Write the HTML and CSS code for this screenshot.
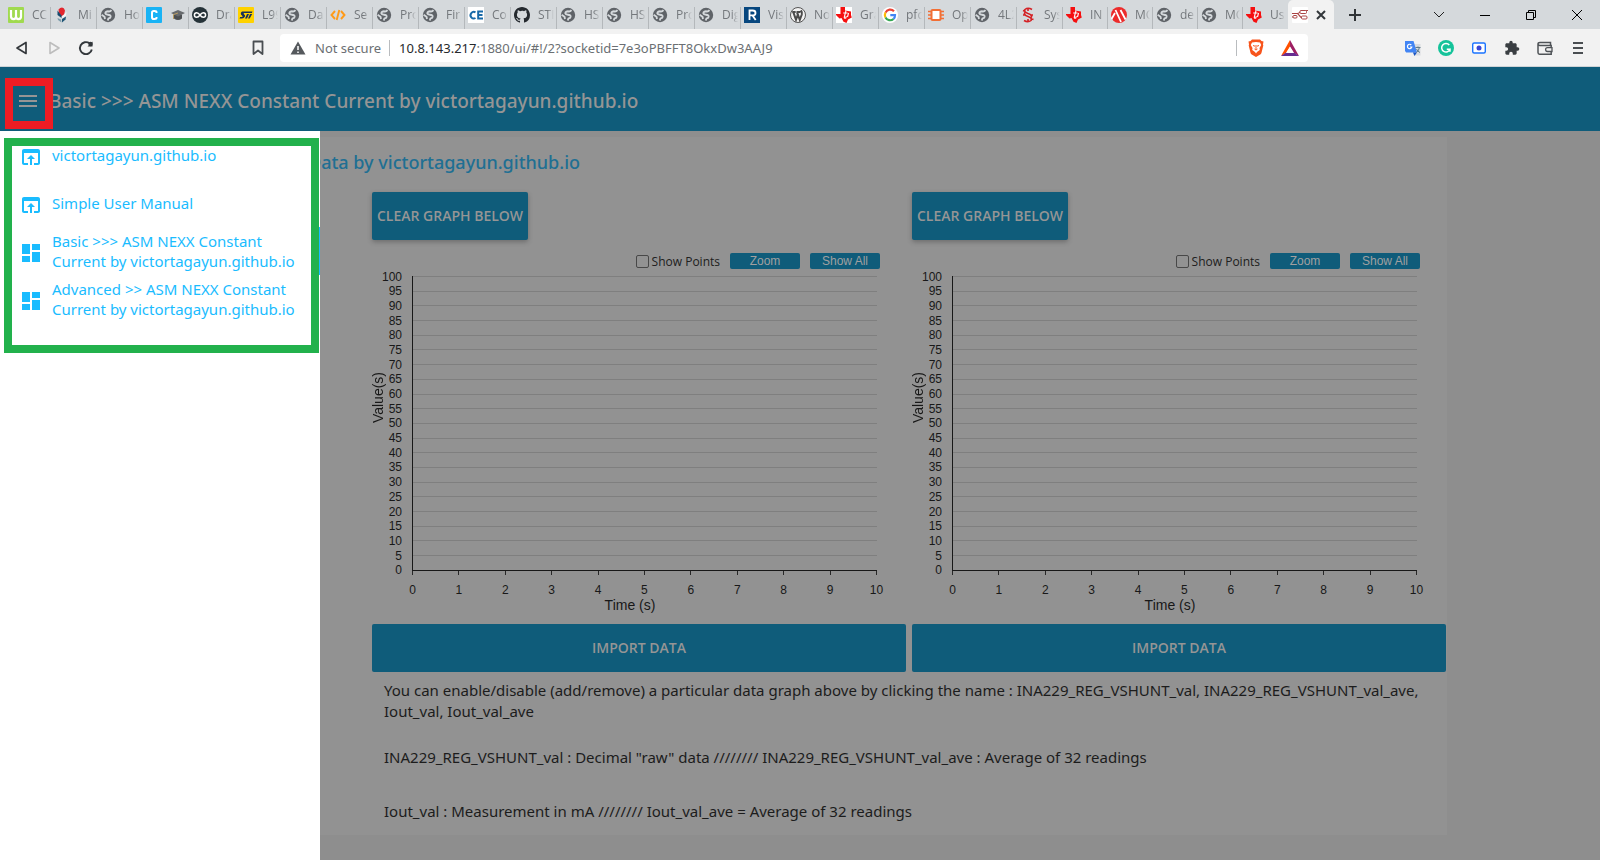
FILE: index.html
```html
<!DOCTYPE html>
<html lang="en">
<head>
<meta charset="utf-8">
<meta name="viewport" content="width=device-width, initial-scale=1">
<title>ASM NEXX Constant Current</title>
<link rel="stylesheet" href="styles.css">
</head>
<body>
<svg class="defs" aria-hidden="true">
  <symbol id="globe" viewBox="0 0 16 16"><circle cx="8" cy="8" r="7.200" fill="#5f6368"/><path d="M11.500 3.200Q10 4.800 8.300 4.300 5.800 4.200 5.300 6.200 5.600 7.600 8 7.700q2.800.2 2.600 2Q10.300 11.200 8.500 11.400L7.800 13.500M1.600 7.800 4.500 9.800 5 12" fill="none" stroke="#d5d9dc" stroke-width="1.900" stroke-linejoin="round"/></symbol>
  <symbol id="wf" viewBox="0 0 16 16"><rect width="16" height="16" rx="1" fill="#a0da4f"/><path d="M3 3v6.500c0 3.400 5 3.400 5 0V3M8 9.500c0 3.400 5 3.400 5 0V3" fill="none" stroke="#fff" stroke-width="2.200"/></symbol>
  <symbol id="tulip" viewBox="0 0 16 16"><path d="M4.500 2.500Q6 .5 8 .5t3 3L10 8 7.500 9.500 5 6z" fill="#e3262d"/><path d="M3.500 3.500 7.500 8.500V11L3.500 8z" fill="#164a6d"/><path d="M12.500 4.500 12 9 8 11.500V9l2.500-2z" fill="#f3f4f4"/><path d="M12 9.500 8 12v3.500l3.500-3z" fill="#1f5575"/><path d="M3.500 11 7 12.500 7.500 15.500 4 13z" fill="#7c9cab"/></symbol>
  <symbol id="cblue" viewBox="0 0 16 16"><rect width="16" height="16" rx="1" fill="#19b3f5"/><path d="M10.500 6V5.200Q10.500 4 8.500 4H7.800Q6 4 6 5.800v4.400Q6 12 7.800 12h.7q2 0 2-1.200V10" fill="none" stroke="#fff" stroke-width="2"/></symbol>
  <symbol id="cap" viewBox="0 0 14 14"><path d="M3 6.500v4q4 3 8 0v-4z" fill="#4d5053"/><path d="M0 5 7 2l7 3-7 3.500z" fill="#686b6e"/><path d="M7 5 2.500 6.500V11" fill="none" stroke="#b99b5f"/></symbol>
  <symbol id="arduino" viewBox="0 0 16 16"><circle cx="8" cy="8" r="8" fill="#253238"/><path d="M8 8C6.800 6.300 6 5.700 4.700 5.700a2.300 2.300 0 0 0 0 4.600C6 10.300 6.800 9.700 8 8s2-2.300 3.300-2.300a2.300 2.300 0 0 1 0 4.600C10 10.300 9.200 9.700 8 8z" fill="none" stroke="#fff" stroke-width="1.500"/></symbol>
  <symbol id="st" viewBox="0 0 16 16"><rect width="16" height="16" rx="1" fill="#ffd200"/><path d="M4 4.500h10.500l-.6 1.500H6q-.8.500 0 1.200Q7.500 8 7 9.500 6 11.500 4 11.500H1.500L2.200 10h2Q5 9.500 4.200 8.800 2.500 7.500 2.800 6q.3-1 1.200-1.500zM9 7h2l-2 4.500H7zM12 7h2.200l-2.500 4.500H10z" fill="#17305a"/></symbol>
  <symbol id="code" viewBox="0 0 16 16"><path d="M5 4 1.500 8 5 12M11 4l3.500 4L11 12M9.300 3 6.700 13" fill="none" stroke="#ff9a17" stroke-width="1.900"/></symbol>
  <symbol id="ce" viewBox="0 0 16 16"><rect width="16" height="16" fill="#fff"/><path d="M7.500 5.300A3.300 3.300 0 1 0 7.500 11M15 4.600H10.200v6.900H15M10.200 8h4.300" fill="none" stroke="#1769a8" stroke-width="2"/></symbol>
  <symbol id="github" viewBox="0 0 16 16"><path d="M8 0C3.580 0 0 3.580 0 8c0 3.540 2.290 6.530 5.470 7.590.4.070.55-.17.55-.38v-1.490c-2.010.37-2.530-.49-2.690-.94-.09-.23-.48-.94-.82-1.130-.28-.15-.68-.52-.01-.53.63-.01 1.080.58 1.230.82.72 1.210 1.870.87 2.330.66.070-.52.280-.87.510-1.070-1.780-.2-3.640-.89-3.640-3.950 0-.87.31-1.590.82-2.150-.08-.2-.36-1.020.08-2.120 0 0 .67-.21 2.200.82A7.600 7.600 0 0 1 8 3.860c.68 0 1.360.09 2 .27 1.530-1.040 2.200-.82 2.200-.82.44 1.100.16 1.920.08 2.120.51.56.82 1.270.82 2.150 0 3.070-1.870 3.750-3.650 3.950.29.25.54.73.54 1.480v2.200c0 .21.15.46.55.38A8 8 0 0 0 16 8c0-4.420-3.580-8-8-8z" fill="#24292e"/></symbol>
  <symbol id="ren" viewBox="0 0 16 16"><rect width="16" height="16" fill="#07477f"/><path d="M5.500 13V3.500h3.200q2.800 0 2.800 2.400T8.700 8.400H5.500m3 0L11.700 13" fill="none" stroke="#fff" stroke-width="1.800"/></symbol>
  <symbol id="wp" viewBox="0 0 16 16"><circle cx="8" cy="8" r="7.500" fill="#f2f2f2" stroke="#555" stroke-width="1"/><path d="M2.200 5h3.500M6.500 5h4M3.400 5.300 6 12.800 8.200 6.500M7 5.300 9.800 12.800 11.800 7.500Q12.500 5.500 11 3.300" fill="none" stroke="#4b4b4b" stroke-width="2"/></symbol>
  <symbol id="ti" viewBox="0 0 16 16"><path d="M4.500 0H9v3.500l6 1V8l.8 2.500-3.800 2-1.500 3.500L7.500 14.800 5.500 11 3.500 11.500 0 8V7h4.500z" fill="#f50f0f"/><path d="M10 3.600 8.300 10q-.3 1.600 1.500 1l.5-1.800M7.200 6h4.300M12.500 6l-1 4" fill="none" stroke="#fff" stroke-width="1.100"/></symbol>
  <symbol id="google" viewBox="0 0 16 16"><circle cx="8" cy="8" r="8" fill="#fff"/><path d="M12 4.300A5.200 5.200 0 0 0 3.500 5.600" fill="none" stroke="#ea4335" stroke-width="2.200"/><path d="M3.500 5.500a5.200 5.200 0 0 0 0 5" fill="none" stroke="#fbbc05" stroke-width="2.200"/><path d="M3.500 10.400a5.200 5.200 0 0 0 8 1.600" fill="none" stroke="#34a853" stroke-width="2.200"/><path d="M11.500 12Q13 10.700 13 8.200H8.300" fill="none" stroke="#4285f4" stroke-width="2.200"/></symbol>
  <symbol id="chip" viewBox="0 0 16 16"><path d="M0 4.500h16M0 8h16M0 11.500h16" stroke="#f26f35" stroke-width="1.400"/><rect x="3.500" y="3" width="9" height="10" rx="1" fill="#fff" stroke="#f26f35" stroke-width="2"/></symbol>
  <symbol id="sect" viewBox="0 0 16 16"><path d="M12 2.500Q8 0 5 2.500 3.500 5 8 6.500q5 1.500 3 4M4 13.500q4 2.500 7 0 1.500-2.500-3-4Q3 8 5 5.500M3 3.500l2.500 1M10.500 11.500l3 1M3 8h3M10 8h3M8 1v3M8 12v3" fill="none" stroke="#d42125" stroke-width="1.600"/></symbol>
  <symbol id="mchp" viewBox="0 0 16 16"><circle cx="8" cy="8" r="8" fill="#ec2b2b"/><path d="M.5 12 4 6M4.500 3 10 15M9.500 3 14.500 12.500" fill="none" stroke="#fff" stroke-width="1.800"/></symbol>
  <symbol id="nodered" viewBox="0 0 16 16"><rect width="16" height="16" rx="1" fill="#fff"/><path d="M0 6.500h5Q7 6.500 8 5t3-1.500h5M5 6.500C7.500 7 7.500 10.500 10 10.500M0 10h2" fill="none" stroke="#aa4444" stroke-width="1.200"/><rect x="8" y="3.500" width="6.500" height="3" rx="1" fill="#fff" stroke="#aa4444"/><rect x="9.500" y="9" width="5.500" height="3" rx="1" fill="#fff" stroke="#aa4444"/><rect x="1" y="8.500" width="4" height="2.500" rx="1" fill="#fff" stroke="#aa4444"/></symbol>
  <symbol id="open" viewBox="0 0 24 24"><path fill="currentColor" d="M19 4H5c-1.110 0-2 .9-2 2v12c0 1.100.89 2 2 2h4v-2H5V8h14v10h-4v2h4c1.100 0 2-.9 2-2V6c0-1.100-.89-2-2-2zm-7 6l-4 4h3v6h2v-6h3l-4-4z"/></symbol>
  <symbol id="dash" viewBox="0 0 24 24"><path fill="currentColor" d="M3 13h8V3H3v10zm0 8h8v-6H3v6zm10 0h8V11h-8v10zm0-18v6h8V3h-8z"/></symbol>
</svg>

<header class="browser">
  <div class="tabstrip">
    <nav class="tabs" aria-label="Open tabs">
      <a class="tab" href="#"><svg class="fav"><use href="#wf"/></svg><span class="tab-title">CC</span></a>
      <a class="tab" href="#"><svg class="fav"><use href="#tulip"/></svg><span class="tab-title">Mi</span></a>
      <a class="tab" href="#"><svg class="fav"><use href="#globe"/></svg><span class="tab-title">Ho</span></a>
      <a class="tab tab-tight" href="#" aria-label="Course"><svg class="fav"><use href="#cblue"/></svg><svg class="cap"><use href="#cap"/></svg></a>
      <a class="tab" href="#"><svg class="fav"><use href="#arduino"/></svg><span class="tab-title">Dra</span></a>
      <a class="tab" href="#"><svg class="fav"><use href="#st"/></svg><span class="tab-title">L99</span></a>
      <a class="tab" href="#"><svg class="fav"><use href="#globe"/></svg><span class="tab-title">Da</span></a>
      <a class="tab" href="#"><svg class="fav"><use href="#code"/></svg><span class="tab-title">Se</span></a>
      <a class="tab" href="#"><svg class="fav"><use href="#globe"/></svg><span class="tab-title">Pro</span></a>
      <a class="tab" href="#"><svg class="fav"><use href="#globe"/></svg><span class="tab-title">Fir</span></a>
      <a class="tab" href="#"><svg class="fav"><use href="#ce"/></svg><span class="tab-title">Co</span></a>
      <a class="tab" href="#"><svg class="fav"><use href="#github"/></svg><span class="tab-title">STI</span></a>
      <a class="tab" href="#"><svg class="fav"><use href="#globe"/></svg><span class="tab-title">HS</span></a>
      <a class="tab" href="#"><svg class="fav"><use href="#globe"/></svg><span class="tab-title">HS</span></a>
      <a class="tab" href="#"><svg class="fav"><use href="#globe"/></svg><span class="tab-title">Pro</span></a>
      <a class="tab" href="#"><svg class="fav"><use href="#globe"/></svg><span class="tab-title">Dig</span></a>
      <a class="tab" href="#"><svg class="fav"><use href="#ren"/></svg><span class="tab-title">Vis</span></a>
      <a class="tab" href="#"><svg class="fav"><use href="#wp"/></svg><span class="tab-title">No</span></a>
      <a class="tab" href="#"><svg class="fav plate"><use href="#ti"/></svg><span class="tab-title">Gra</span></a>
      <a class="tab" href="#"><svg class="fav"><use href="#google"/></svg><span class="tab-title">pfc</span></a>
      <a class="tab" href="#"><svg class="fav"><use href="#chip"/></svg><span class="tab-title">Op</span></a>
      <a class="tab" href="#"><svg class="fav"><use href="#globe"/></svg><span class="tab-title">4L2</span></a>
      <a class="tab" href="#"><svg class="fav"><use href="#sect"/></svg><span class="tab-title">Sys</span></a>
      <a class="tab narrow" href="#"><svg class="fav"><use href="#ti"/></svg><span class="tab-title">IN</span></a>
      <a class="tab narrow" href="#"><svg class="fav"><use href="#mchp"/></svg><span class="tab-title">MC</span></a>
      <a class="tab narrow" href="#"><svg class="fav"><use href="#globe"/></svg><span class="tab-title">de</span></a>
      <a class="tab narrow" href="#"><svg class="fav"><use href="#globe"/></svg><span class="tab-title">MC</span></a>
      <a class="tab narrow last" href="#"><svg class="fav"><use href="#ti"/></svg><span class="tab-title">Us</span></a>
      <div class="tab active"><svg class="fav"><use href="#nodered"/></svg><button class="bare" aria-label="Close tab"><svg width="10" height="10" viewBox="0 0 10 10"><path d="M1 1l8 8M9 1L1 9" stroke="#33373b" stroke-width="2"/></svg></button></div>
    </nav>
    <button class="bare newtab" aria-label="New tab"><svg width="12" height="12" viewBox="0 0 12 12"><path d="M6 0v12M0 6h12" stroke="#303437" stroke-width="2"/></svg></button>
    <div class="winbtns">
      <button class="bare" aria-label="Search tabs"><svg width="12" height="12" viewBox="0 0 12 12"><path d="M1 3l5 5 5-5" fill="none" stroke="#222"/></svg></button>
      <button class="bare" aria-label="Minimize"><svg width="12" height="12" viewBox="0 0 12 12"><path d="M1 6.500h10" stroke="#000"/></svg></button>
      <button class="bare" aria-label="Restore"><svg width="12" height="12" viewBox="0 0 12 12"><path d="M1.500 3.500h7v7h-7zM3.500 3.500v-2h7v7h-2" fill="none" stroke="#000"/></svg></button>
      <button class="bare" aria-label="Close"><svg width="12" height="12" viewBox="0 0 12 12"><path d="M1 1l10 10M11 1L1 11" stroke="#000"/></svg></button>
    </div>
  </div>
  <div class="toolbar">
    <div class="navbtns">
      <button class="bare" aria-label="Back"><svg width="16" height="16" viewBox="0 0 16 16"><path d="M12 2.500v11L3 8z" fill="none" stroke="#33373b" stroke-width="1.700" stroke-linejoin="round"/></svg></button>
      <button class="bare" aria-label="Forward"><svg width="16" height="16" viewBox="0 0 16 16"><path d="M4 2.500v11L13 8z" fill="none" stroke="#bdbdbd" stroke-width="1.600" stroke-linejoin="round"/></svg></button>
      <button class="bare" aria-label="Reload"><svg width="16" height="16" viewBox="0 0 16 16"><path d="M11.500 3.300A6 6 0 1 0 13.800 9.500" fill="none" stroke="#33373b" stroke-width="1.900"/><path d="M14.500 1.500v5h-5z" fill="#33373b"/><circle cx="12.500" cy="4" r="2.200" fill="#33373b"/></svg></button>
    </div>
    <button class="bare bookmark" aria-label="Bookmark"><svg width="12" height="16" viewBox="0 0 12 16"><path d="M1.500 1.500h9v12.500L6 10.500 1.500 14z" fill="none" stroke="#4a4e52" stroke-width="1.800" stroke-linejoin="round"/></svg></button>
    <div class="address">
      <svg width="16" height="14" viewBox="0 0 16 14"><path d="M8 .5 15.500 13.500H.5z" fill="#55595d"/><path d="M8 5v4M8 10.500v1.500" stroke="#fff" stroke-width="1.500"/></svg>
      <span class="secure">Not secure</span>
      <span class="bar"></span>
      <span class="url"><b>10.8.143.217</b>:1880/ui/#!/2?socketid=7e3oPBFFT8OkxDw3AAJ9</span>
      <span class="bar"></span>
      <svg class="brave" width="16" height="18" viewBox="0 0 16 18"><path d="M4 .5h8L13.500 2l2 .5L15 5.500l.3 1-1.800 7.200q-.3 1-1.200 1.700L8 18l-4.300-2.600q-1-.7-1.200-1.700L.7 6.500l.3-1L.5 2.500l2-.5z" fill="#f7541c"/><path d="M4 3.500 8 3l4 .5 1.200 2.500-1.700 3 .3 2L9 13l-1 1.500L7 13l-2.800-2 .3-2-1.700-3z" fill="#fff"/><path d="M5 6.500l2 .7M11 6.500l-2 .7M8 6v4M6.500 10 8 11l1.500-1" fill="none" stroke="#f7541c"/></svg>
      <svg width="18" height="16" viewBox="0 0 18 16"><path d="M9 0 0 16l5-3 4-6z" fill="#ff5000"/><path d="M9 0l9 16-5-3-4-6z" fill="#9e1f63"/><path d="M0 16h18l-5-3.500H5z" fill="#662d91"/><path d="M9 6.500 13 13H5z" fill="#fff"/></svg>
    </div>
    <div class="exts">
      <button class="bare" aria-label="Translate"><svg width="16" height="16" viewBox="0 0 16 16"><path d="M6 4h9.500v11.500H9z" fill="#dadce0"/><path d="M0 1h8.500L12 12.500H1.200L0 11z" fill="#4285f4"/><path d="M8 12.500h4L9.500 16z" fill="#1a56c4"/><path d="M6.300 5A2.200 2.200 0 1 0 6.800 7H5" fill="none" stroke="#fff" stroke-width="1.200"/><path d="M10.500 7.500h5M13 6.500v1M11.500 12.500q2.500-2 2.800-4.800M11.500 9q1 2.500 3.500 3.500" fill="none" stroke="#607d8b"/></svg></button>
      <button class="bare" aria-label="Grammar"><svg width="16" height="16" viewBox="0 0 16 16"><circle cx="8" cy="8" r="8" fill="#15c39a"/><path d="M11.300 5A4.300 4.300 0 1 0 12 9.200H8.800M12 9v2.800" fill="none" stroke="#fff" stroke-width="1.500"/></svg></button>
      <button class="bare" aria-label="Capture"><svg width="16" height="16" viewBox="0 0 16 16"><rect x="1.700" y="3" width="12.600" height="10" rx="1.500" fill="#fff" stroke="#1a73ff" stroke-width="1.400"/><circle cx="8" cy="8" r="2.500" fill="#3a45d4"/></svg></button>
      <button class="bare" aria-label="Extensions"><svg width="16" height="16" viewBox="0 0 24 24"><path fill="#3a3e42" d="M20.500 11H19V7c0-1.100-.9-2-2-2h-4V3.500a2.500 2.500 0 0 0-5 0V5H4c-1.100 0-2 .9-2 2v3.800h1.500a2.700 2.700 0 0 1 0 5.400H2V20c0 1.100.9 2 2 2h3.800v-1.500a2.700 2.700 0 0 1 5.400 0V22H17c1.100 0 2-.9 2-2v-4h1.500a2.500 2.500 0 0 0 0-5z"/></svg></button>
      <button class="bare" aria-label="Wallet"><svg width="16" height="16" viewBox="0 0 16 16"><path d="M13.500 5V2.500H3Q1 2.500 1 4t2 1.500h11.200v8.700H2.500Q1 14.200 1 12.500V4" fill="none" stroke="#4f5357" stroke-width="1.500"/><path d="M15 7.700h-4.500a1.900 1.900 0 0 0 0 3.800H15z" fill="#f2f2f2" stroke="#4f5357" stroke-width="1.300"/></svg></button>
      <button class="bare" aria-label="Menu"><svg width="16" height="16" viewBox="0 0 16 16"><path d="M3 3h10M3 8h10M3 13h10" stroke="#4a4e52" stroke-width="2"/></svg></button>
    </div>
  </div>
</header>

<div class="app">
  <header class="appbar">
    <button class="bare menu" aria-label="Toggle menu"><svg width="24" height="24" viewBox="0 0 24 24"><path fill="currentColor" d="M3 18h18v-2H3v2zm0-5h18v-2H3v2zm0-7v2h18V6H3z"/></svg></button>
    <h1 class="app-title">Basic &gt;&gt;&gt; ASM NEXX Constant Current by victortagayun.github.io</h1>
    <span class="mark mark-red"></span>
  </header>

  <div class="stage">
    <nav class="sidenav">
      <a class="item" href="#"><svg class="ico"><use href="#open"/></svg><span>victortagayun.github.io</span></a>
      <a class="item" href="#"><svg class="ico"><use href="#open"/></svg><span>Simple User Manual</span></a>
      <a class="item current" href="#"><svg class="ico"><use href="#dash"/></svg><span>Basic &gt;&gt;&gt; ASM NEXX Constant<br>Current by victortagayun.github.io</span></a>
      <a class="item" href="#"><svg class="ico"><use href="#dash"/></svg><span>Advanced &gt;&gt; ASM NEXX Constant<br>Current by victortagayun.github.io</span></a>
      <span class="mark mark-green"></span>
    </nav>

    <main class="panel">
      <h2 class="panel-title">Data by victortagayun.github.io</h2>
      <div class="groups">
        <section class="group">
          <button class="btn raised">CLEAR GRAPH BELOW</button>
          <div class="controls">
            <label class="check"><input type="checkbox">Show Points</label>
            <button class="mini">Zoom</button>
            <button class="mini">Show All</button>
          </div>
          <div class="chart"></div>
          <button class="btn wide">IMPORT DATA</button>
        </section>
        <section class="group">
          <button class="btn raised">CLEAR GRAPH BELOW</button>
          <div class="controls">
            <label class="check"><input type="checkbox">Show Points</label>
            <button class="mini">Zoom</button>
            <button class="mini">Show All</button>
          </div>
          <div class="chart"></div>
          <button class="btn wide">IMPORT DATA</button>
        </section>
      </div>
      <div class="notes">
        <p>You can enable/disable (add/remove) a particular data graph above by clicking the name : INA229_REG_VSHUNT_val, INA229_REG_VSHUNT_val_ave, Iout_val, Iout_val_ave</p>
        <p>INA229_REG_VSHUNT_val : Decimal "raw" data //////// INA229_REG_VSHUNT_val_ave : Average of 32 readings</p>
        <p>Iout_val : Measurement in mA //////// Iout_val_ave = Average of 32 readings</p>
      </div>
    </main>
  </div>
</div>
<script src="chart.js"></script>
</body>
</html>
```
FILE: styles.css
```css
* { box-sizing: border-box; }
body {
  margin: 0;
  min-height: 100vh;
  display: flex;
  flex-direction: column;
  font-family: "Noto Sans", "Open Sans", sans-serif;
  font-size: 15px;
  background: #8e8e8e;
  overflow-x: hidden;
}
h1, h2, p { margin: 0; }
button { font: inherit; }
a { text-decoration: none; color: inherit; }
svg { display: block; flex: none; }
.defs { position: absolute; width: 0; height: 0; }
.bare { display: flex; border: 0; padding: 0; background: none; color: inherit; }

/* browser frame */
.tabstrip { display: flex; align-items: center; height: 29px; background: #d5d9dc; padding-left: 5px; }
.tabs { display: flex; height: 29px; }
.tab {
  display: flex;
  align-items: center;
  gap: 8px;
  width: 46px;
  padding-left: 3px;
  overflow: hidden;
  font-family: "Open Sans", sans-serif;
  font-size: 12px;
  color: #74787c;
  background: linear-gradient(#b4b8bb, #b4b8bb) right 7px / 1px 22px no-repeat;
}
.tab-title {
  flex: 1;
  overflow: hidden;
  white-space: nowrap;
  margin-right: 3px;
  -webkit-mask-image: linear-gradient(90deg, #000 60%, transparent);
  mask-image: linear-gradient(90deg, #000 60%, transparent);
}
.narrow { width: 45px; }
.last { background-size: 0; }
.tab-tight { gap: 9px; }
.active { background: #f2f2f2; border-radius: 5px 5px 0 0; padding-left: 4px; }
.fav { width: 16px; height: 16px; }
.plate { background: #fff; }
.cap { width: 14px; height: 14px; }
.newtab { margin-left: 15px; }
.winbtns { display: flex; gap: 34px; margin-left: auto; padding-right: 17px; }
.toolbar { display: flex; align-items: center; height: 38px; background: #f2f2f2; border-bottom: 1px solid #cfd3d6; padding: 0 14px; }
.navbtns { display: flex; gap: 16px; }
.bookmark { margin-left: 158px; }
.address {
  display: flex;
  align-items: center;
  flex: 1;
  height: 28px;
  margin: 0 97px 0 16px;
  padding: 0 9px 0 10px;
  background: #fff;
  border-radius: 4px;
  color: #6b6f73;
  font-size: 13px;
}
.secure { margin-left: 9px; }
.bar { width: 1px; height: 16px; background: #b9bcbf; margin: 0 9px 0 8px; }
.url { flex: 1; }
.url b { font-weight: 400; color: #26292c; }
.brave { margin: 0 17px 0 2px; }
.exts { display: flex; gap: 17px; }

/* application */
.app { flex: 1; display: flex; flex-direction: column; }
.appbar {
  position: relative;
  display: flex;
  align-items: center;
  gap: 9px;
  height: 64px;
  padding: 4px 0 0 16px;
  background: #0f5c7a;
  color: #959595;
}
.app-title { font-size: 19px; font-weight: 500; white-space: nowrap; }
.mark { position: absolute; pointer-events: none; }
.mark-red { left: 5px; top: 11px; width: 48px; height: 51px; border: 8px solid #ed1c24; }
.mark-green { left: 4px; top: 7px; width: 315px; height: 215px; border: 8px solid #22b14c; }
.stage { position: relative; flex: 1; padding: 6px 0 24px; }
.sidenav {
  position: absolute;
  inset: 0 auto 0 0;
  width: 320px;
  background: #fff;
  color: #1abcff;
}
.item { display: flex; align-items: center; gap: 9px; height: 48px; padding-left: 19px; line-height: 20px; white-space: nowrap; }
.current { border-right: 4px solid #1abcff; }
.ico { width: 24px; height: 24px; margin-top: 4px; }
.panel { max-width: 1447px; padding: 8px 1px 0 308px; background: #929292; }
.panel-title { font-size: 18px; font-weight: 500; line-height: 34px; color: #206f93; margin-bottom: 13px; }
.groups { display: grid; grid-template-columns: 1fr 1fr; gap: 6px; padding-left: 64px; }
.btn {
  height: 48px;
  border: 0;
  border-radius: 2px;
  background: #0f5c7a;
  color: #959595;
  font: 600 14px/20px "Open Sans", sans-serif;
  padding: 0 4px;
  white-space: nowrap;
}
.raised { width: 156px; box-shadow: 0 2px 5px rgba(0, 0, 0, .26); }
.wide { width: 100%; }
.controls { display: flex; justify-content: flex-end; align-items: center; gap: 10px; padding: 13px 26px 0 0; height: 29px; }
.check { display: flex; align-items: center; gap: 3px; font-family: "Open Sans", sans-serif; font-size: 12px; color: #202020; }
.check input { appearance: none; width: 13px; height: 13px; margin: 0; border: 1px solid #484848; border-radius: 2px; }
.mini {
  width: 70px;
  height: 16px;
  padding: 0;
  border: 0;
  border-radius: 2px;
  background: #0f5c7a;
  color: #a0a0a0;
  font: 12px/16px "Liberation Sans", Arial, sans-serif;
}
.chart {
  display: grid;
  grid-template-columns: 12px 28px 1fr;
  padding: 7px 29px 12px 0;
  color: #181818;
  font: 12px/12px "Liberation Sans", Arial, sans-serif;
}
.ylabel { writing-mode: vertical-rl; transform: rotate(180deg); font-size: 14px; justify-self: start; align-self: center; padding-top: 52px; }
.yticks { display: flex; flex-direction: column; justify-content: space-between; height: 295px; padding-right: 10px; }
.yticks span { display: flex; align-items: center; justify-content: flex-end; height: 1px; }
.plot { display: flex; flex-direction: column; justify-content: space-between; height: 295px; border-left: 1px solid #181818; }
.plot i { height: 1px; background: #7f7f7f; }
.plot i:last-child { background: #181818; }
.xticks { grid-column: 3; display: flex; justify-content: space-between; }
.xticks span { display: flex; justify-content: center; width: 1px; padding-top: 13px; background: linear-gradient(#282828, #282828) 0 0 / 1px 4px no-repeat; }
.xlabel { grid-column: 1 / -1; text-align: center; font-size: 14px; margin-top: 2px; padding-left: 11px; line-height: 14px; }
.notes { padding: 8px 12px 13px 76px; color: #1c1c1c; line-height: 21px; }
.notes p + p { margin-top: 33px; }
.notes p:nth-child(2) { margin-top: 25px; }
```
FILE: chart.js
```js
document.querySelectorAll('.chart').forEach(function (chart) {
  var y = '', lines = '', x = '';
  for (var v = 100; v >= 0; v -= 5) {
    y += '<span>' + v + '</span>';
    lines += '<i></i>';
  }
  for (var t = 0; t <= 10; t++) x += '<span>' + t + '</span>';
  chart.innerHTML =
    '<div class="ylabel">Value(s)</div>' +
    '<div class="yticks">' + y + '</div>' +
    '<div class="plot">' + lines + '</div>' +
    '<div class="xticks">' + x + '</div>' +
    '<div class="xlabel">Time (s)</div>';
});
```
